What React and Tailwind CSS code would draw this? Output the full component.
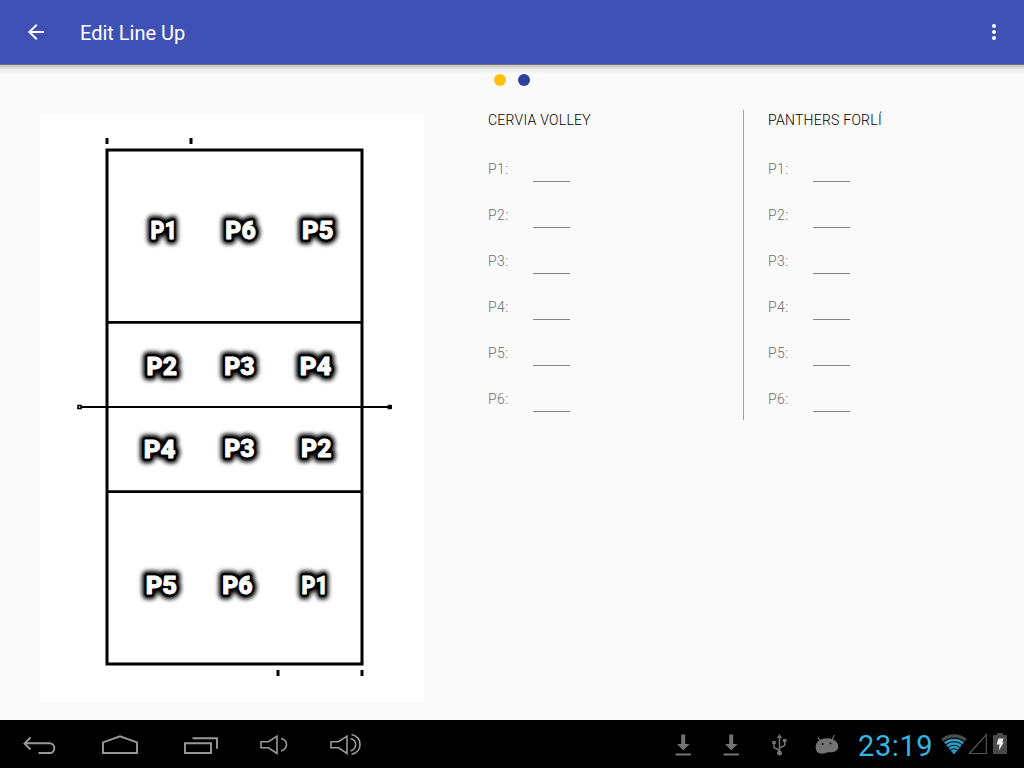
const positions = ["P1", "P2", "P3", "P4", "P5", "P6"];

const courtLabels = [
  { t: "P1", x: 150.5, y: 239, w: 26.5 },
  { t: "P6", x: 225.3, y: 239.2, w: 30.5 },
  { t: "P5", x: 302, y: 239.2, w: 31.5 },
  { t: "P2", x: 146.5, y: 375, w: 30.5 },
  { t: "P3", x: 224.2, y: 375, w: 30.5 },
  { t: "P4", x: 299.7, y: 375, w: 32 },
  { t: "P4", x: 143.7, y: 458, w: 32 },
  { t: "P3", x: 224.2, y: 457.3, w: 30.5 },
  { t: "P2", x: 301, y: 457.3, w: 30.5 },
  { t: "P5", x: 145.7, y: 594.3, w: 31.5 },
  { t: "P6", x: 222.2, y: 594.3, w: 30.5 },
  { t: "P1", x: 301.5, y: 594.3, w: 26.5 },
];

function Court() {
  return (
    <svg className="block h-[589px] w-[384px] shrink-0 bg-white" viewBox="40 113 384 589">
      <defs>
        <filter id="glow" x="-40%" y="-60%" width="180%" height="220%">
          <feGaussianBlur stdDeviation="2.1" />
        </filter>
      </defs>
      <g fill="none" stroke="#000">
        <rect x="107" y="150" width="255" height="514" strokeWidth="3" />
        <path d="M107 322.3H362M107 491.7H362" strokeWidth="2.8" />
        <path d="M81 407H388" strokeWidth="1.8" />
        <path d="M107 138v6M191 138v6M278 670v6M362 670v6" strokeWidth="3" />
        <rect x="78" y="405.5" width="3" height="3" strokeWidth="1.6" fill="#fff" />
      </g>
      <rect x="387.5" y="404.7" width="4.5" height="4.6" rx="1" />
      <g fontFamily="Roboto, 'Liberation Sans', sans-serif" fontSize="26.5" fontWeight="900" strokeLinejoin="round">
        {courtLabels.map((l, i) => (
          <g key={i}>
            <text x={l.x} y={l.y} textLength={l.w} lengthAdjust="spacingAndGlyphs" stroke="#000" strokeWidth="10.5" filter="url(#glow)" aria-hidden="true">{l.t}</text>
            <text x={l.x} y={l.y} textLength={l.w} lengthAdjust="spacingAndGlyphs" stroke="#000" strokeWidth="5.5" aria-hidden="true">{l.t}</text>
            <text x={l.x} y={l.y} textLength={l.w} lengthAdjust="spacingAndGlyphs" fill="#fff" stroke="#fff" strokeWidth="0.8">{l.t}</text>
          </g>
        ))}
      </g>
    </svg>
  );
}

function Team({ name }) {
  return (
    <div className="flex flex-col">
      <h2 className="h-5 text-[14px] leading-5 tracking-[0.25px] font-light text-black">{name}</h2>
      <div className="mt-[16px] flex flex-col">
        {positions.map((p) => (
          <div key={p} className="flex h-[46px] items-start">
            <span className="w-[45px] pt-[13px] text-[14px] leading-5 tracking-[0.4px] font-light text-[#6e6e6e]">{p}:</span>
            <span className="h-[36px] w-[37px] border-b border-[#858585]" />
          </div>
        ))}
      </div>
    </div>
  );
}

const Download = () => (
  <svg className="h-8 w-8" viewBox="0 0 32 32" fill="#737373">
    <path d="M14.2 6.5h4v9.5h4.5L16.2 22.3 10 16h4.2zM8.5 25.5h15.5v2H8.5z" />
  </svg>
);

function SystemBar() {
  return (
    <footer className="flex h-12 bg-black">
      <svg className="h-12 w-[400px]" viewBox="0 0 400 48" fill="none" stroke="#999" strokeWidth="1.9">
        <path d="M30.5 17.5l-6 6 6 6M24.5 23.3H50.5a5 5 0 0 1 0 9.7H38.5" />
        <path d="M103 33V22.3L120 16.3 137 22.3V33z" />
        <path d="M185 23.2h26v9.8h-26zM192.5 18.2H217v10.5" />
        <path d="M261 21.7h7.5l8.5-5.5v17.3l-8.5-5.7H261zM281 18.5q5.5 1.5 5.5 6t-5.5 6.5" strokeWidth="1.6" />
        <path d="M331 21.7h7.5l8.5-5.5v17.3l-8.5-5.7H331zM350.5 18.5q5.2 1.5 5.2 6t-5.2 6.5M351.5 14.5q8.5 2 8.5 10t-8.5 9.7" strokeWidth="1.6" />
      </svg>
      <div className="flex-1" />
      <div className="flex items-center">
        <div className="flex gap-4">
          <Download />
          <Download />
          <svg className="h-8 w-8" viewBox="0 0 32 32" fill="none" stroke="#737373" strokeWidth="1.5">
            <path d="M16.5 8v18M16.5 22.5L11 19.5V15.5M16.5 20L21.8 17.3V13.5" />
            <path d="M16.5 6l2.7 4h-5.4zM9.2 13h3.6v3H9.2zM20 11h3.5v3H20z" fill="#737373" stroke="none" />
            <circle cx="16.5" cy="25" r="2.5" fill="#737373" stroke="none" />
          </svg>
          <svg className="h-8 w-8" viewBox="0 0 32 32" fill="#737373">
            <path d="M4.7 19.5C4.5 13 10 10.3 16.5 10.3S27.3 14 27.3 18.5C27.3 23 23 24.3 20 24.3c-3-.3-4 .3-6 .9C9 26.5 4.9 25 4.7 19.5z" />
            <path d="M9 13L7 8.7M21 12L23.3 7" stroke="#737373" strokeWidth="1.2" />
            <circle cx="11.7" cy="16" r="0.9" fill="#000" />
            <circle cx="19.5" cy="15.3" r="0.9" fill="#000" />
          </svg>
        </div>
        <span className="ml-[15px] w-[81px] pt-[3px] text-[29px] leading-8 tracking-[0.6px] whitespace-nowrap text-[#33b5e5]">23:19</span>
        <svg className="h-12 w-[85px]" viewBox="939 720 85 48">
          <defs>
            <clipPath id="wifi"><path d="M954 754.5L940.5 738Q954 727 967.5 738z" /></clipPath>
          </defs>
          <g clipPath="url(#wifi)" fill="none" stroke="#2b9cc7" strokeWidth="2.7">
            <circle cx="954" cy="754" r="18.2" stroke="#4c4c4c" strokeWidth="3.3" />
            <circle cx="954" cy="754" r="14" />
            <circle cx="954" cy="754" r="10.5" />
            <circle cx="954" cy="754" r="7" />
            <circle cx="954" cy="754" r="3.5" />
            <circle cx="954" cy="754" r="1" />
          </g>
          <path d="M969.5 753.5L986.3 734.5V753.5z" fill="none" stroke="#555" strokeWidth="1.2" />
          <path d="M993 735h4v-2h6v2h4v19H993z" fill="#4a4a4a" />
          <path d="M998.5 738.5h5l-1.2 4h1.5l-5 8 .7-6H996.5z" fill="#eee" />
        </svg>
      </div>
    </footer>
  );
}

export default function App() {
  return (
    <div className="flex h-[768px] w-[1024px] flex-col overflow-hidden bg-[#fafafa] font-['Roboto','Liberation_Sans',sans-serif]">
      <header className="flex h-16 shrink-0 items-center bg-[#3f51b5] pr-[18px] pl-6 text-white">
        <svg className="h-6 w-6" viewBox="0 0 24 24" fill="#fff">
          <path d="M20 11H7.83l5.59-5.59L12 4l-8 8 8 8 1.41-1.41L7.83 13H20v-2z" />
        </svg>
        <h1 className="ml-8 pt-[2px] text-[20px] leading-6">Edit Line Up</h1>
        <svg className="ml-auto h-6 w-6" viewBox="0 0 24 24" fill="#fff">
          <circle cx="12" cy="6" r="2" />
          <circle cx="12" cy="12" r="2" />
          <circle cx="12" cy="18" r="2" />
        </svg>
      </header>
      <div className="h-[10px] shrink-0 border-t border-[#747474] bg-linear-to-b from-[#c2c2c2] via-[#eeeeee] to-[#fafafa]" />
      <main className="flex h-[646px] shrink-0 flex-col">
        <div className="flex justify-center gap-3">
          <span className="h-3 w-3 rounded-full bg-[#ffc107]" />
          <span className="h-3 w-3 rounded-full bg-[#303f9f]" />
        </div>
        <div className="flex pt-[24px] pl-10">
          <div className="pt-[3px]">
            <Court />
          </div>
          <div className="ml-16 flex h-[310px] w-[256px] border-r border-[#a0a0a0]">
            <Team name="CERVIA VOLLEY" />
          </div>
          <div className="ml-6">
            <Team name="PANTHERS FORLÍ" />
          </div>
        </div>
      </main>
      <SystemBar />
    </div>
  );
}
